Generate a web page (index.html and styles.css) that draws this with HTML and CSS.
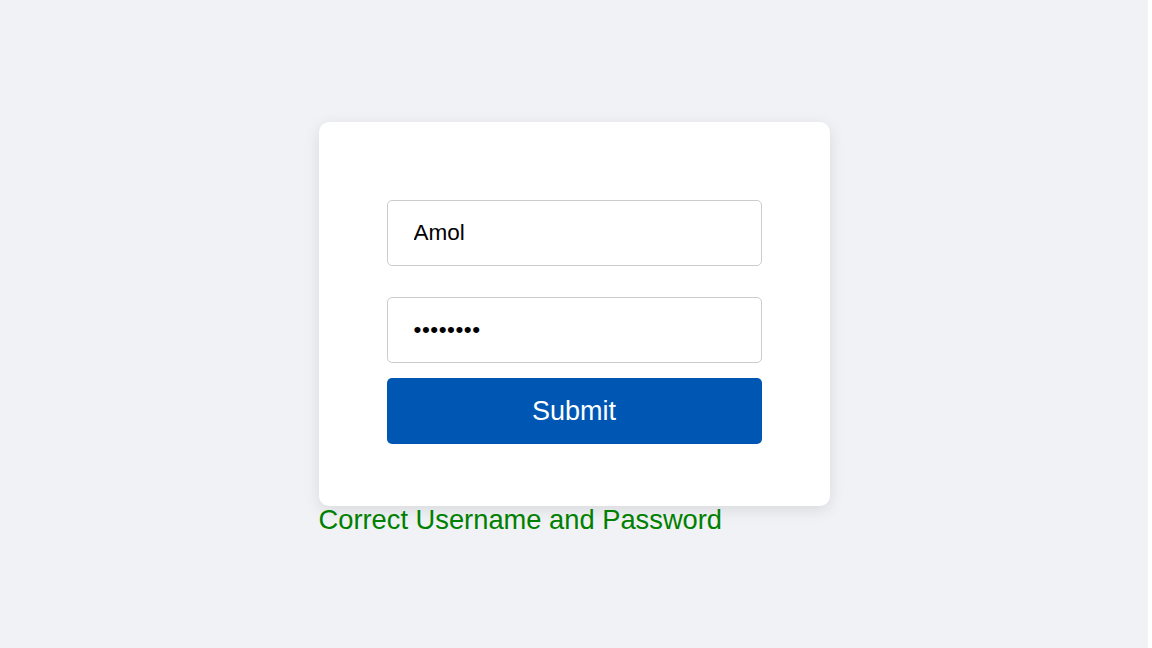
FILE: index.html
```html
<!DOCTYPE html>
<html lang="en">
<head>
<meta charset="utf-8">
<title>Login</title>
<link rel="stylesheet" href="styles.css">
</head>
<body>
<main class="page">
  <div class="wrap">
    <form class="card">
      <input class="field" type="text" value="Amol">
      <input class="field field-pass" type="password" value="password">
      <button class="submit" type="button">Submit</button>
    </form>
    <p class="message">Correct Username and Password</p>
  </div>
</main>
</body>
</html>
```

FILE: styles.css
```css
html {
  margin: 0;
  background: #ffffff;
}
body {
  margin: 0 4px 0 0;
  background: #f0f2f5;
  font-family: "Liberation Sans", Arial, sans-serif;
}
.page {
  height: 648px;
  display: flex;
  justify-content: center;
  align-items: flex-start;
  padding-top: 122px;
  box-sizing: border-box;
}
.wrap {
  display: flex;
  flex-direction: column;
  width: 511px;
}
.card {
  background: #ffffff;
  border-radius: 10px;
  box-shadow: 0 4px 16px rgba(0, 0, 0, 0.1);
  padding: 78px 68px 62px;
  display: flex;
  flex-direction: column;
  height: 384px;
  box-sizing: border-box;
}
.field {
  height: 66px;
  box-sizing: border-box;
  border: 1px solid #cccccc;
  border-radius: 5px;
  padding: 0 26px;
  font-family: "Liberation Sans", Arial, sans-serif;
  font-size: 22.5px;
  color: #000;
  background: #fff;
  outline: none;
}
.field-pass {
  margin-top: 31px;
  letter-spacing: 0.5px;
}
.submit {
  margin-top: 15px;
  height: 66px;
  border: none;
  border-radius: 5px;
  background: #0057b3;
  color: #ffffff;
  font-family: "Liberation Sans", Arial, sans-serif;
  font-size: 27px;
  cursor: pointer;
}
.message {
  margin: 0;
  color: #008000;
  font-size: 27.3px;
  line-height: 28px;
}
```
